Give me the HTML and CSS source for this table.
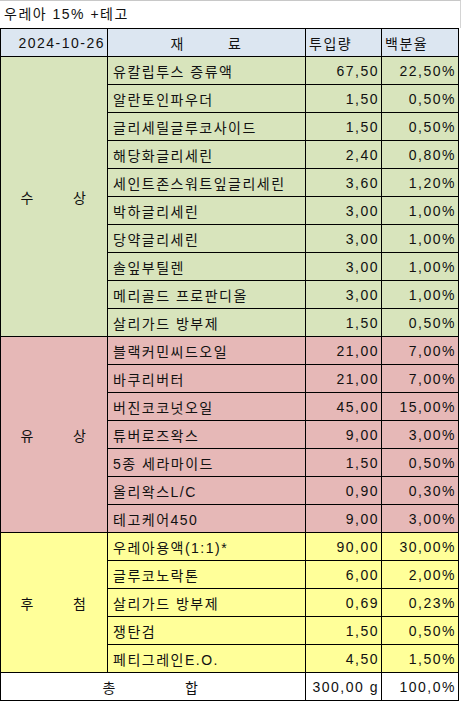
FILE: index.html
```html
<!DOCTYPE html>
<html lang="ko">
<head>
<meta charset="utf-8">
<link rel="stylesheet" href="styles.css">
</head>
<body>
<div class="sheet">
  <div class="title">우레아 15% +테고</div>
  <table class="recipe">
    <colgroup>
      <col class="c1"><col class="c2"><col class="c3"><col class="c4">
    </colgroup>
    <thead>
      <tr class="head">
        <th class="date">2024-10-26</th>
        <th class="spread-cell"><span class="spread"><span>재</span><span>료</span></span></th>
        <th class="lab">투입량</th>
        <th class="lab">백분율</th>
      </tr>
    </thead>
    <tbody class="water">
      <tr><td class="grp" rowspan="10"><span class="spread g"><span>수</span><span>상</span></span></td><td class="name">유칼립투스 증류액</td><td class="num">67,50</td><td class="num">22,50%</td></tr>
      <tr><td class="name">알란토인파우더</td><td class="num">1,50</td><td class="num">0,50%</td></tr>
      <tr><td class="name">글리세릴글루코사이드</td><td class="num">1,50</td><td class="num">0,50%</td></tr>
      <tr><td class="name">해당화글리세린</td><td class="num">2,40</td><td class="num">0,80%</td></tr>
      <tr><td class="name">세인트존스워트잎글리세린</td><td class="num">3,60</td><td class="num">1,20%</td></tr>
      <tr><td class="name">박하글리세린</td><td class="num">3,00</td><td class="num">1,00%</td></tr>
      <tr><td class="name">당약글리세린</td><td class="num">3,00</td><td class="num">1,00%</td></tr>
      <tr><td class="name">솔잎부틸렌</td><td class="num">3,00</td><td class="num">1,00%</td></tr>
      <tr><td class="name">메리골드 프로판디올</td><td class="num">3,00</td><td class="num">1,00%</td></tr>
      <tr><td class="name">살리가드 방부제</td><td class="num">1,50</td><td class="num">0,50%</td></tr>
    </tbody>
    <tbody class="oil">
      <tr><td class="grp" rowspan="7"><span class="spread g"><span>유</span><span>상</span></span></td><td class="name">블랙커민씨드오일</td><td class="num">21,00</td><td class="num">7,00%</td></tr>
      <tr><td class="name">바쿠리버터</td><td class="num">21,00</td><td class="num">7,00%</td></tr>
      <tr><td class="name">버진코코넛오일</td><td class="num">45,00</td><td class="num">15,00%</td></tr>
      <tr><td class="name">튜버로즈왁스</td><td class="num">9,00</td><td class="num">3,00%</td></tr>
      <tr><td class="name">5종 세라마이드</td><td class="num">1,50</td><td class="num">0,50%</td></tr>
      <tr><td class="name">올리왁스L/C</td><td class="num">0,90</td><td class="num">0,30%</td></tr>
      <tr><td class="name">테고케어450</td><td class="num">9,00</td><td class="num">3,00%</td></tr>
    </tbody>
    <tbody class="add">
      <tr><td class="grp" rowspan="5"><span class="spread g"><span>후</span><span>첨</span></span></td><td class="name">우레아용액(1:1)*</td><td class="num">90,00</td><td class="num">30,00%</td></tr>
      <tr><td class="name">글루코노락톤</td><td class="num">6,00</td><td class="num">2,00%</td></tr>
      <tr><td class="name">살리가드 방부제</td><td class="num">0,69</td><td class="num">0,23%</td></tr>
      <tr><td class="name">쟁탄검</td><td class="num">1,50</td><td class="num">0,50%</td></tr>
      <tr><td class="name">페티그레인E.O.</td><td class="num">4,50</td><td class="num">1,50%</td></tr>
    </tbody>
    <tfoot>
      <tr class="total"><td colspan="2" class="tot"><span class="spread t"><span>총</span><span>합</span></span></td><td class="num">300,00 g</td><td class="num">100,0%</td></tr>
    </tfoot>
  </table>
</div>
</body>
</html>
```
FILE: styles.css
```css
html, body {
  margin: 0;
  padding: 0;
  background: #fff;
}
body {
  font-family: "Liberation Sans", "Noto Sans CJK KR", sans-serif;
  font-size: 14px;
  color: #111;
  letter-spacing: 1.5px;
}
.sheet {
  width: 461px;
}
.title {
  box-sizing: border-box;
  height: 28px;
  width: 461px;
  border-top: 1px solid #c8c8c8;
  border-right: 1px solid #d4d4d4;
  padding-left: 4px;
  line-height: 27px;
}
.recipe {
  border-collapse: collapse;
  table-layout: fixed;
  width: 459px;
}
.c1 { width: 107px; }
.c2 { width: 198px; }
.c3 { width: 76px; }
.c4 { width: 77px; }
.recipe th, .recipe td {
  border: 1px solid #000;
  height: 27px;
  padding: 0;
  font-weight: normal;
  white-space: nowrap;
  overflow: hidden;
}
.head th { background: #dce6f1; }
.date { text-align: right; padding-right: 2px !important; }
.lab { text-align: left; padding-left: 3px !important; }
.spread {
  display: flex;
  justify-content: center;
  gap: 43px;
}
.spread.g { gap: 38px; }
.spread.t { gap: 68px; padding-right: 4px; }
.name { text-align: left; padding-left: 5px !important; }
.num { text-align: right; padding-right: 2px !important; }
.water td { background: #d8e4bc; }
.oil td { background: #e6b8b7; }
.add td { background: #ffff99; }
.total td { background: #fff; }
```
